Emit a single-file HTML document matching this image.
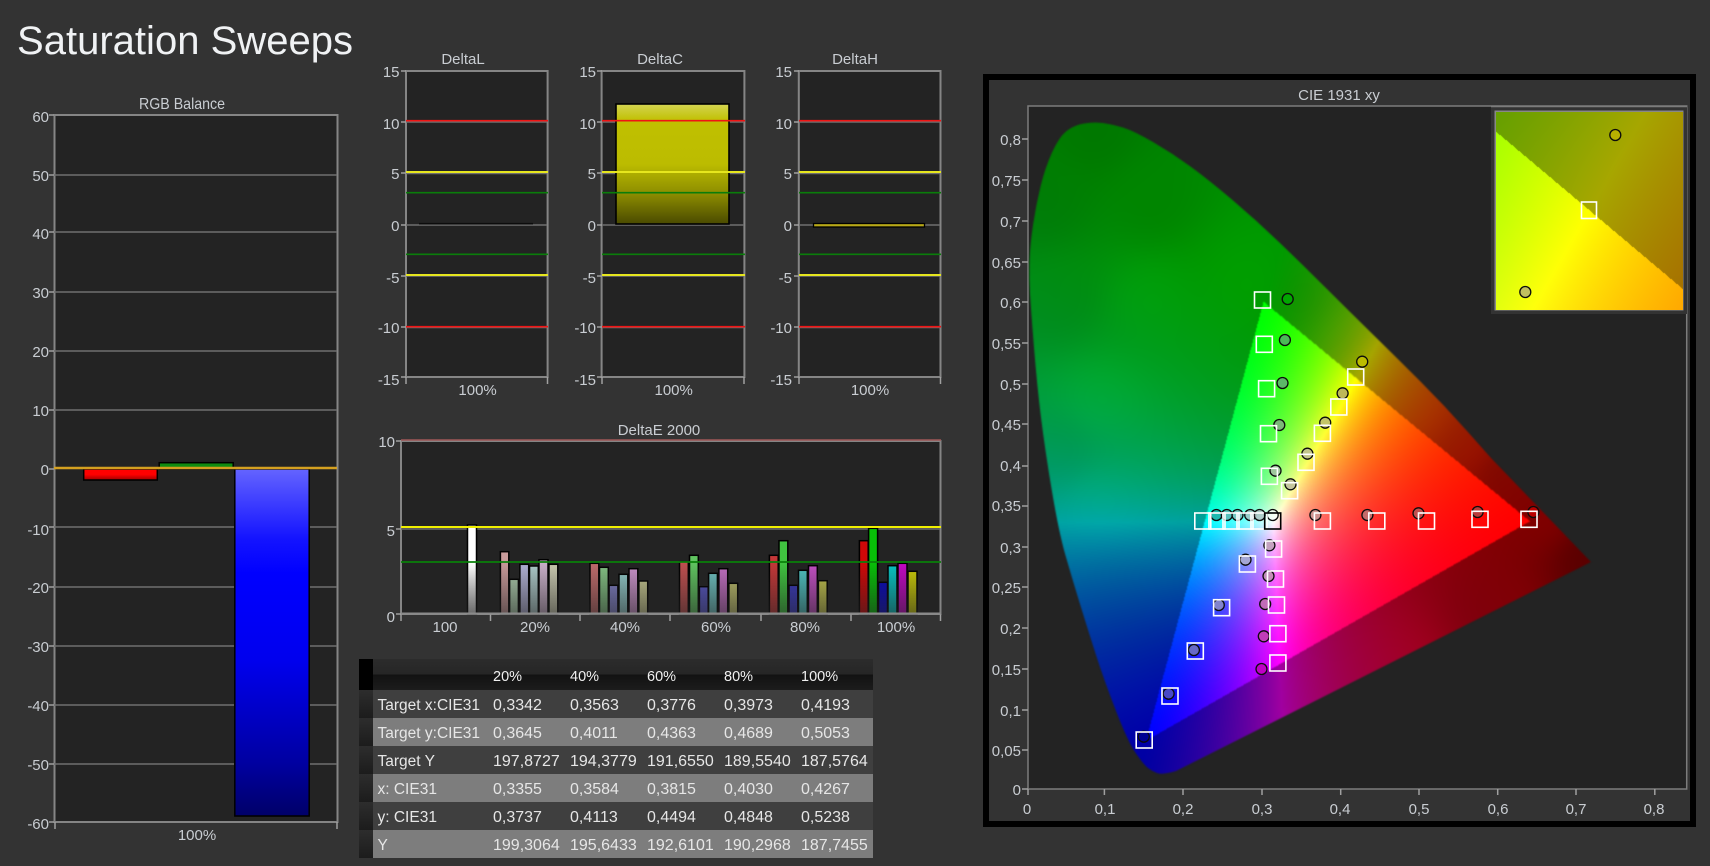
<!DOCTYPE html>
<html><head><meta charset="utf-8"><title>Saturation Sweeps</title>
<style>
html,body{margin:0;padding:0;background:#333;width:1710px;height:866px;overflow:hidden}
svg,canvas{position:absolute;left:0;top:0}
#cie{left:1028px;top:105px;filter:blur(.5px)}
#ins{left:1496px;top:112px}
text{font-family:"Liberation Sans",sans-serif;font-size:15px;fill:#c9cdd2}
.r{text-anchor:end}.m{text-anchor:middle}
.g{stroke:#6f6f6f;stroke-width:1.5}
.b{stroke:#858585;stroke-width:2;fill:#232323}
.t{stroke:#a0a0a0;stroke-width:1.5}
.red{stroke:#f01414;stroke-width:1.6}.yel{stroke:#e6e61e;stroke-width:2}.grn{stroke:#0a7d0a;stroke-width:1.6}
.tb text{font-size:16px;fill:#e6e6e6}
.tb .l{font-size:15.5px}.tb .h{font-size:14.5px;fill:#f0f0f0}
.bar rect{stroke:#000;stroke-width:1.5}
.s rect{fill:none;stroke:#fff;stroke-width:1.6}
.c circle{stroke:#0c0c0c;stroke-width:1.3;r:5.5px}
</style></head><body>
<svg width="1710" height="866" viewBox="0 0 1710 866">
<defs>
<linearGradient id="gr" x1="0" y1="0" x2="0" y2="1"><stop offset="0" stop-color="#ff0000"/><stop offset=".5" stop-color="#ff0000"/><stop offset="1" stop-color="#a00000"/></linearGradient>
<linearGradient id="gb" x1="0" y1="0" x2="0" y2="1"><stop offset="0" stop-color="#6464ff"/><stop offset=".2" stop-color="#1414ff"/><stop offset=".3" stop-color="#0000ff"/><stop offset=".55" stop-color="#0000ee"/><stop offset=".85" stop-color="#0000a0"/><stop offset="1" stop-color="#000068"/></linearGradient>
<linearGradient id="gy" x1="0" y1="0" x2="0" y2="1"><stop offset="0" stop-color="#d4d452"/><stop offset=".14" stop-color="#c0c000"/><stop offset=".5" stop-color="#bcbc00"/><stop offset=".75" stop-color="#8c8c00"/><stop offset="1" stop-color="#4a4a00"/></linearGradient>
<linearGradient id="gw" x1="0" y1="0" x2="0" y2="1"><stop offset="0" stop-color="#fff"/><stop offset=".5" stop-color="#fff"/><stop offset="1" stop-color="#d8d8d8"/></linearGradient>
<linearGradient id="gh" x1="0" y1="0" x2="0" y2="1"><stop offset="0" stop-color="#2c2c2c"/><stop offset=".48" stop-color="#262626"/><stop offset=".52" stop-color="#121212"/><stop offset="1" stop-color="#1c1c1c"/></linearGradient>
<linearGradient id="gl" x1="0" y1="0" x2="0" y2="1"><stop offset="0" stop-color="#2d2d2d"/><stop offset="1" stop-color="#1c1c1c"/></linearGradient>
<linearGradient id="fade" gradientUnits="userSpaceOnUse" x1="0" y1="520" x2="0" y2="614"><stop offset="0" stop-color="#fff"/><stop offset=".45" stop-color="#fff"/><stop offset="1" stop-color="#666"/></linearGradient>
<mask id="mk" maskUnits="userSpaceOnUse" x="400" y="500" width="540" height="120"><rect x="400" y="500" width="540" height="120" fill="url(#fade)"/></mask>
</defs>

<text x="17" y="54" style="font-size:40px;fill:#f0f2f4" textLength="336" lengthAdjust="spacingAndGlyphs">Saturation Sweeps</text>

<!-- RGB Balance -->
<text x="182" y="109" class="m" style="font-size:16px" textLength="86" lengthAdjust="spacingAndGlyphs">RGB Balance</text>
<rect class="b" x="54.5" y="115" width="283" height="707"/>
<g class="g"><path d="M54 175H337M54 232H337M54 292H337M54 351H337M54 410H337M54 527H337M54 587H337M54 646H337M54 705H337M54 764H337" fill="none"/></g>
<g class="t"><path d="M49 115H54M49 175H54M49 232H54M49 292H54M49 351H54M49 410H54M49 469H54M49 527H54M49 587H54M49 646H54M49 705H54M49 764H54M49 822H54M55 822V829M337 822V829" fill="none"/></g>
<g class="r">
<text x="49" y="122">60</text><text x="49" y="181">50</text><text x="49" y="239">40</text><text x="49" y="298">30</text><text x="49" y="357">20</text><text x="49" y="416">10</text><text x="49" y="475">0</text><text x="49" y="535">-10</text><text x="49" y="593">-20</text><text x="49" y="652">-30</text><text x="49" y="711">-40</text><text x="49" y="770">-50</text><text x="49" y="829">-60</text>
</g>
<text x="197" y="840" class="m">100%</text>
<rect x="83.7" y="469" width="73.6" height="11" fill="url(#gr)" stroke="#000" stroke-width="1.5"/>
<rect x="159.2" y="462.7" width="74" height="6.3" fill="#108c10" stroke="#000" stroke-width="1.5"/>
<rect x="234.8" y="469" width="74.4" height="347" fill="url(#gb)" stroke="#000" stroke-width="1.5"/>
<path d="M54 468H337" stroke="#d4a020" stroke-width="2.4"/>

<!-- Delta charts -->
<text x="463" y="64" class="m">DeltaL</text><text x="660" y="64" class="m">DeltaC</text><text x="855" y="64" class="m">DeltaH</text>
<g id="d1">
<rect class="b" x="406" y="71" width="141.6" height="306"/>
<path class="g" d="M406 122H547M406 173.500H547M406 225H547M406 276H547M406 327.500H547" fill="none"/>
<path class="t" d="M401 71H406M401 122H406M401 173H406M401 225H406M401 276H406M401 327H406M401 377H406M406 377V384M547.500 377V384" fill="none"/>
<path d="M419 223.700H533" stroke="#0c0c0c" stroke-width="1.6"/>
<path class="red" d="M406 120.700H548M406 326.700H548"/><path class="yel" d="M406 172H548M406 275H548"/><path class="grn" d="M406 192.700H548M406 254.300H548"/>
</g>
<g>
<rect class="b" x="601.600" y="71" width="142.800" height="306"/>
<path class="g" d="M602 122H744M602 173.500H744M602 225H744M602 276H744M602 327.500H744" fill="none"/>
<path class="t" d="M597 71H602M597 122H602M597 173H602M597 225H602M597 276H602M597 327H602M597 377H602M602 377V384M744 377V384" fill="none"/>
<rect x="616" y="104" width="113" height="120" fill="url(#gy)" stroke="#000" stroke-width="1.6"/>
<path class="red" d="M602 120.700H745M602 326.700H745"/><path class="yel" d="M602 172H745M602 275H745"/><path class="grn" d="M602 192.700H745M602 254.300H745"/>
</g>
<g>
<rect class="b" x="798.800" y="71" width="141.700" height="306"/>
<path class="g" d="M799 122H940M799 173.500H940M799 225H940M799 276H940M799 327.500H940" fill="none"/>
<path class="t" d="M794 71H799M794 122H799M794 173H799M794 225H799M794 276H799M794 327H799M794 377H799M799 377V384M940.500 377V384" fill="none"/>
<rect x="813.500" y="223.500" width="111" height="3.500" fill="#b8a818" stroke="#000" stroke-width="1.3"/>
<path class="red" d="M799 120.700H941M799 326.700H941"/><path class="yel" d="M799 172H941M799 275H941"/><path class="grn" d="M799 192.700H941M799 254.300H941"/>
</g>
<g class="r">
<text x="399.500" y="77">15</text><text x="399.500" y="129">10</text><text x="399.500" y="179">5</text><text x="399.500" y="231">0</text><text x="399.500" y="283">-5</text><text x="399.500" y="333">-10</text><text x="399.500" y="385">-15</text>
<text x="596" y="77">15</text><text x="596" y="129">10</text><text x="596" y="179">5</text><text x="596" y="231">0</text><text x="596" y="283">-5</text><text x="596" y="333">-10</text><text x="596" y="385">-15</text>
<text x="792" y="77">15</text><text x="792" y="129">10</text><text x="792" y="179">5</text><text x="792" y="231">0</text><text x="792" y="283">-5</text><text x="792" y="333">-10</text><text x="792" y="385">-15</text>
</g>
<text x="477.600" y="395" class="m">100%</text><text x="673.700" y="395" class="m">100%</text><text x="870" y="395" class="m">100%</text>

<!-- DeltaE -->
<text x="659" y="435" class="m">DeltaE 2000</text>
<rect class="b" x="401" y="441" width="539.500" height="173"/>
<path d="M401 440H941" stroke="#a05858" stroke-width="1.500"/>
<path class="g" d="M401 529H940" fill="none"/>
<path class="t" d="M396 441H401M396 529H401M396 614H401M401 614V621M490.500 614V621M580 614V621M670 614V621M761 614V621M851 614V621M940.500 614V621" fill="none"/>
<g class="r"><text x="395" y="447">10</text><text x="395" y="536">5</text><text x="395" y="622">0</text></g>
<g class="m"><text x="445" y="632">100</text><text x="535" y="632">20%</text><text x="625" y="632">40%</text><text x="716" y="632">60%</text><text x="805" y="632">80%</text><text x="896" y="632">100%</text></g>
<g class="bar" mask="url(#mk)">
<rect x="467.500" y="525" width="9" height="89" fill="url(#gw)"/>
<rect x="500.400" y="551.700" width="8.400" height="62.300" fill="#c89a9a"/><rect x="509.600" y="579.300" width="8.800" height="34.700" fill="#aeceae"/><rect x="519.900" y="564.300" width="8.800" height="49.700" fill="#b0b0d4"/><rect x="529.500" y="566" width="8.800" height="48" fill="#aecaca"/><rect x="539" y="559.700" width="9" height="54.300" fill="#cab0ca"/><rect x="549" y="564.300" width="8.800" height="49.700" fill="#cacab0"/>
<rect x="590" y="563.300" width="8.800" height="50.700" fill="#c06c6c"/><rect x="599.500" y="567.300" width="8.800" height="46.700" fill="#84c284"/><rect x="609.100" y="585.300" width="8.800" height="28.700" fill="#8484cc"/><rect x="619" y="574.300" width="8.800" height="39.700" fill="#94cccc"/><rect x="629" y="568.700" width="8.800" height="45.300" fill="#cc94cc"/><rect x="638.900" y="581" width="8.800" height="33" fill="#cccc94"/>
<rect x="679.500" y="561.700" width="8.800" height="52.300" fill="#c05050"/><rect x="689.500" y="555.300" width="8.800" height="58.700" fill="#60c460"/><rect x="699.400" y="586.700" width="8.800" height="27.300" fill="#5a5acc"/><rect x="708.600" y="573.300" width="8.800" height="40.700" fill="#70c4c4"/><rect x="718.900" y="568.700" width="8.800" height="45.300" fill="#c470c4"/><rect x="728.900" y="583.300" width="8.800" height="30.700" fill="#c4c470"/>
<rect x="769.400" y="555.300" width="8.800" height="58.700" fill="#c43838"/><rect x="779" y="540.700" width="8.800" height="73.300" fill="#40c440"/><rect x="789" y="585.300" width="8.800" height="28.700" fill="#3c3cc4"/><rect x="798.500" y="570.300" width="8.800" height="43.700" fill="#50c4c4"/><rect x="808.500" y="565.700" width="8.800" height="48.300" fill="#c450c4"/><rect x="818.400" y="580.700" width="8.800" height="33.300" fill="#c8c850"/>
<rect x="859.400" y="540.700" width="8.800" height="73.300" fill="#d00808"/><rect x="868.600" y="528.300" width="9" height="85.700" fill="#08c008"/><rect x="878.500" y="582.300" width="9" height="31.700" fill="#0808c4"/><rect x="888" y="565.700" width="9" height="48.300" fill="#08c4c4"/><rect x="898" y="563.300" width="9" height="50.700" fill="#c408c4"/><rect x="908" y="571.300" width="9" height="42.700" fill="#cccc08"/>
</g>
<path d="M401 527H941" stroke="#f0f000" stroke-width="2"/>
<path d="M401 562H941" stroke="#0a800a" stroke-width="1.800"/>
<path d="M401 613.500H941" stroke="#8a8a8a" stroke-width="2"/>

<!-- Table -->
<rect x="373" y="659" width="500" height="31" fill="url(#gh)"/>
<rect x="359" y="659" width="14" height="31" fill="#000"/>
<rect x="373" y="690" width="500" height="28" fill="#3f3f3f"/><rect x="373" y="718" width="500" height="28" fill="#7d7d7d"/><rect x="373" y="746" width="500" height="28" fill="#3f3f3f"/><rect x="373" y="774" width="500" height="28" fill="#7d7d7d"/><rect x="373" y="802" width="500" height="28" fill="#3f3f3f"/><rect x="373" y="830" width="500" height="28" fill="#7d7d7d"/>
<rect x="359" y="690" width="14" height="28" fill="url(#gl)"/><rect x="359" y="718" width="14" height="28" fill="url(#gl)"/><rect x="359" y="746" width="14" height="28" fill="url(#gl)"/><rect x="359" y="774" width="14" height="28" fill="url(#gl)"/><rect x="359" y="802" width="14" height="28" fill="url(#gl)"/><rect x="359" y="830" width="14" height="28" fill="url(#gl)"/>
<g class="tb">
<text class="h" x="493" y="681">20%</text><text class="h" x="570" y="681">40%</text><text class="h" x="647" y="681">60%</text><text class="h" x="724" y="681">80%</text><text class="h" x="801" y="681">100%</text>
<text class="l" x="377.500" y="710">Target x:CIE31</text><text x="493" y="710">0,3342</text><text x="570" y="710">0,3563</text><text x="647" y="710">0,3776</text><text x="724" y="710">0,3973</text><text x="801" y="710">0,4193</text>
<text class="l" x="377.500" y="738">Target y:CIE31</text><text x="493" y="738">0,3645</text><text x="570" y="738">0,4011</text><text x="647" y="738">0,4363</text><text x="724" y="738">0,4689</text><text x="801" y="738">0,5053</text>
<text class="l" x="377.500" y="766">Target Y</text><text x="493" y="766">197,8727</text><text x="570" y="766">194,3779</text><text x="647" y="766">191,6550</text><text x="724" y="766">189,5540</text><text x="801" y="766">187,5764</text>
<text class="l" x="377.500" y="794">x: CIE31</text><text x="493" y="794">0,3355</text><text x="570" y="794">0,3584</text><text x="647" y="794">0,3815</text><text x="724" y="794">0,4030</text><text x="801" y="794">0,4267</text>
<text class="l" x="377.500" y="822">y: CIE31</text><text x="493" y="822">0,3737</text><text x="570" y="822">0,4113</text><text x="647" y="822">0,4494</text><text x="724" y="822">0,4848</text><text x="801" y="822">0,5238</text>
<text class="l" x="377.500" y="850">Y</text><text x="493" y="850">199,3064</text><text x="570" y="850">195,6433</text><text x="647" y="850">192,6101</text><text x="724" y="850">190,2968</text><text x="801" y="850">187,7455</text>
</g>

<!-- CIE frame -->
<rect x="986" y="77" width="707" height="747" fill="#333" stroke="#000" stroke-width="6"/>
<text x="1339" y="100" class="m">CIE 1931 xy</text>
<rect x="1028" y="106" width="658.700" height="683" fill="#232323" stroke="#7c7c7c" stroke-width="1.500"/>
<path class="t" d="M1022 139H1028M1022 180H1028M1022 221H1028M1022 262H1028M1022 302H1028M1022 343H1028M1022 384H1028M1022 424H1028M1022 466H1028M1022 506H1028M1022 547H1028M1022 587H1028M1022 628H1028M1022 669H1028M1022 710H1028M1022 750H1028M1022 789H1028M1028 789V795M1104.400 789V795M1183 789V795M1262 789V795M1340.700 789V795M1419 789V795M1497.700 789V795M1576 789V795M1654.800 789V795" fill="none"/>
<g class="r">
<text x="1021" y="145">0,8</text><text x="1021" y="186">0,75</text><text x="1021" y="227">0,7</text><text x="1021" y="268">0,65</text><text x="1021" y="308">0,6</text><text x="1021" y="349">0,55</text><text x="1021" y="390">0,5</text><text x="1021" y="430">0,45</text><text x="1021" y="471">0,4</text><text x="1021" y="511">0,35</text><text x="1021" y="553">0,3</text><text x="1021" y="593">0,25</text><text x="1021" y="634">0,2</text><text x="1021" y="675">0,15</text><text x="1021" y="716">0,1</text><text x="1021" y="756">0,05</text><text x="1021" y="795">0</text>
</g>
<g class="m">
<text x="1027" y="814">0</text><text x="1105" y="814">0,1</text><text x="1183" y="814">0,2</text><text x="1262" y="814">0,3</text><text x="1340" y="814">0,4</text><text x="1419" y="814">0,5</text><text x="1498" y="814">0,6</text><text x="1576" y="814">0,7</text><text x="1654" y="814">0,8</text>
</g>
<rect x="1491" y="106" width="196" height="208" fill="#333"/>
<path d="M1491 106.500H1687" stroke="#7c7c7c" stroke-width="1.500"/>
<rect x="1494.500" y="110.500" width="189" height="200" fill="#888"/>
</svg>

<canvas id="cie" width="660" height="685"></canvas>
<canvas id="ins" width="187" height="198"></canvas>

<svg width="1710" height="866" viewBox="0 0 1710 866">
<g class="c">
<circle cx="1533.400" cy="512" r="5" fill="#c80000" fill-opacity=".8"/><circle cx="1477.600" cy="512" r="5" fill="#a84848" fill-opacity=".8"/><circle cx="1418.500" cy="513.300" r="5" fill="#b05c5c" fill-opacity=".8"/><circle cx="1367.400" cy="515" r="5" fill="#b87878" fill-opacity=".8"/><circle cx="1315.400" cy="515" r="5" fill="#c09898" fill-opacity=".8"/>
<circle cx="1216.400" cy="515" r="5" fill="#20a8a0" fill-opacity=".8"/><circle cx="1226.800" cy="515" r="5" fill="#60b0b0" fill-opacity=".8"/><circle cx="1237.500" cy="515" r="5" fill="#80b8b8" fill-opacity=".8"/><circle cx="1250.200" cy="515" r="5" fill="#a0c0c0" fill-opacity=".8"/><circle cx="1259.600" cy="515" r="5" fill="#b0c0c0" fill-opacity=".8"/><circle cx="1272.700" cy="515" r="5" fill="#fff" fill-opacity=".6"/>
<circle cx="1269.400" cy="545.300" r="5" fill="#c0a0b8" fill-opacity=".9"/><circle cx="1268.500" cy="576" r="5" fill="#c090b0" fill-opacity=".9"/><circle cx="1265.200" cy="604" r="5" fill="#c070b0" fill-opacity=".9"/><circle cx="1263.800" cy="636.300" r="5" fill="#c040b0" fill-opacity=".9"/><circle cx="1261.500" cy="669" r="5" fill="#c000c0" fill-opacity=".9"/>
<circle cx="1245.500" cy="559.700" r="5" fill="#a8a8d0" fill-opacity=".9"/><circle cx="1218.800" cy="605" r="5" fill="#8888c8" fill-opacity=".9"/><circle cx="1193.900" cy="650" r="5" fill="#7070c0" fill-opacity=".9"/><circle cx="1168.600" cy="693.700" r="5" fill="#5050c0" fill-opacity=".9"/><circle cx="1143.800" cy="736.700" r="5" fill="#000090" fill-opacity=".9"/>
<circle cx="1287.700" cy="299" r="5" fill="#00a800" fill-opacity=".9"/><circle cx="1284.900" cy="340" r="5" fill="#50b060" fill-opacity=".9"/><circle cx="1282.500" cy="383" r="5" fill="#60b070" fill-opacity=".9"/><circle cx="1279.300" cy="425" r="5" fill="#80b080" fill-opacity=".9"/><circle cx="1275.500" cy="470.700" r="5" fill="#a0c0a0" fill-opacity=".9"/>
<circle cx="1362.200" cy="361.700" r="5" fill="#c0c000" fill-opacity=".9"/><circle cx="1342.600" cy="393.300" r="5" fill="#b8b060" fill-opacity=".9"/><circle cx="1325.200" cy="422.700" r="5" fill="#c0c070" fill-opacity=".9"/><circle cx="1307.400" cy="453.700" r="5" fill="#c0c090" fill-opacity=".9"/><circle cx="1290.500" cy="484.300" r="5" fill="#c0c0a0" fill-opacity=".9"/>
<circle cx="1615.300" cy="135" r="5" fill="#b8b000"/><circle cx="1525.300" cy="292" r="5" fill="#c0c060"/>
</g>
<g class="s">
<rect x="1254.500" y="292" width="16" height="16"/><rect x="1256.300" y="336.300" width="16" height="16"/><rect x="1258.600" y="380.700" width="16" height="16"/><rect x="1260.500" y="425.700" width="16" height="16"/><rect x="1261.400" y="468.300" width="16" height="16"/>
<rect x="1347.700" y="369" width="16" height="16"/><rect x="1330.800" y="399" width="16" height="16"/><rect x="1314.400" y="425.300" width="16" height="16"/><rect x="1298" y="454.300" width="16" height="16"/><rect x="1281.600" y="482.700" width="16" height="16"/>
<rect x="1194.800" y="513" width="16" height="16"/><rect x="1209" y="513" width="16" height="16"/><rect x="1223" y="513" width="16" height="16"/><rect x="1237" y="513" width="16" height="16"/><rect x="1251" y="513" width="16" height="16"/>
<rect x="1314.400" y="513" width="16" height="16"/><rect x="1368.800" y="513" width="16" height="16"/><rect x="1418.500" y="513" width="16" height="16"/><rect x="1472" y="511.300" width="16" height="16"/><rect x="1521" y="511.300" width="16" height="16"/>
<rect x="1265.600" y="541" width="16" height="16"/><rect x="1267.500" y="571" width="16" height="16"/><rect x="1268.500" y="597" width="16" height="16"/><rect x="1269.900" y="625.700" width="16" height="16"/><rect x="1269.900" y="655" width="16" height="16"/>
<rect x="1239.400" y="556" width="16" height="16"/><rect x="1213.600" y="599.700" width="16" height="16"/><rect x="1187.300" y="643" width="16" height="16"/><rect x="1162" y="688" width="16" height="16"/><rect x="1136.200" y="732" width="16" height="16"/>
<rect x="1581.500" y="202" width="15" height="16.500"/>
<rect x="1264.700" y="513" width="16" height="16" style="stroke:#000"/>
</g>
</svg>

<script>
var A=[[1094,130,.47],[1045,200,.49],[1150,200,.52],[1250,285,.62],[1150,300,.62],[1060,300,.55],[1100,400,.66],[1060,450,.6],[1100,500,.66],[1120,600,.62],[1150,720,.66],[1300,300,.58],[1340,340,.62],[1370,370,.66],[1420,410,.66],[1470,450,.6],[1500,470,.5],[1540,510,.5],[1590,560,.35],[1500,610,.5],[1400,670,.63],[1300,730,.63],[1230,750,.63],[1170,770,.63]];
function dim(px,py){var s=0,w=0;for(var i=0;i<A.length;i++){var dx=px-A[i][0],dy=py-A[i][1],d=dx*dx+dy*dy+400,q=1/(d*Math.sqrt(d));s+=q;w+=q*A[i][2];}return w/s;}
function col(px,py,o){
  var x=(px-1028)/783.5,y=Math.max((789-py)/813,.002);
  var X=x/y,Z=(1-x-y)/y;
  var r=3.2406*X-1.5372-.4986*Z,g=-.9689*X+1.8758+.0415*Z,b=.0557*X-.204+1.057*Z;
  var V=(r>=0&&g>=0&&b>=0)?1:dim(px,py);
  r=Math.max(r,0);g=Math.max(g,0);b=Math.max(b,0);
  var m=Math.max(r,g,b,1e-6);
  o[0]=255*V*Math.pow(r/m,1.25);o[1]=255*V*Math.pow(g/m,1.25);o[2]=255*V*Math.pow(b/m,1.25);
}
var o=[0,0,0];
var c=document.getElementById('cie'),ctx=c.getContext('2d');
var W=c.width,H=c.height,im=ctx.createImageData(W,H),d=im.data,k=0;
for(var j=0;j<H;j++)for(var i=0;i<W;i++){
  col(1028+i,105+j,o);d[k]=o[0];d[k+1]=o[1];d[k+2]=o[2];d[k+3]=255;k+=4;
}
ctx.putImageData(im,0,0);
var P=[[1176,771],[1162,775],[1152,771],[1144,765],[1128,742],[1104,680],[1087,627],[1072,578],[1059,533],[1045,450],[1037,385],[1031,310],[1029,278],[1030,245],[1036,205],[1045,168],[1059,137],[1074,125],[1094,122],[1112,124],[1134,131],[1172,153],[1209,180],[1256,220],[1303,265],[1350,312],[1397,358],[1444,405],[1491,458]];
ctx.globalCompositeOperation='destination-in';
ctx.beginPath();
ctx.moveTo(1591-1028,562-105);
ctx.lineTo(P[0][0]-1028,P[0][1]-105);
for(var n=1;n<P.length-1;n++){
  var mx=(P[n][0]+P[n+1][0])/2-1028,my=(P[n][1]+P[n+1][1])/2-105;
  ctx.quadraticCurveTo(P[n][0]-1028,P[n][1]-105,mx,my);
}
ctx.lineTo(P[P.length-1][0]-1028,P[P.length-1][1]-105);
ctx.closePath();ctx.fillStyle='#000';ctx.fill();
var c2=document.getElementById('ins'),t2=c2.getContext('2d'),im2=t2.createImageData(c2.width,c2.height),e=im2.data;k=0;
for(var j=0;j<c2.height;j++)for(var i=0;i<c2.width;i++){
  var sx=.4193+(1496+i-1589)/3800,sy=.5053-(112+j-209.7)/4030;
  col(1028+sx*783.5,789-sy*813,o);e[k]=o[0];e[k+1]=o[1];e[k+2]=o[2];e[k+3]=255;k+=4;
}
t2.putImageData(im2,0,0);
</script>
</body></html>
